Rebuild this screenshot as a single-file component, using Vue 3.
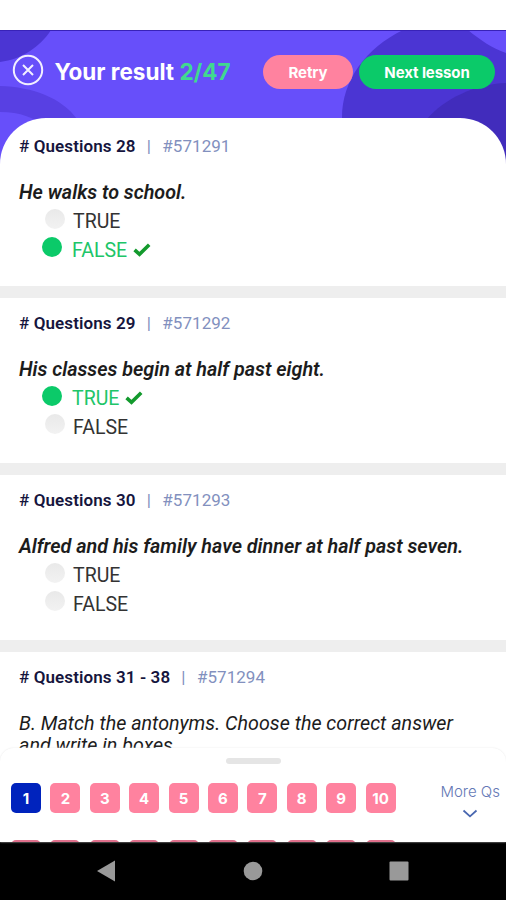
<script setup>
import { ref } from 'vue'

const score = ref('2/47')
const current = ref(1)

const questions = ref([
  {
    title: 'Questions 28',
    code: '#571291',
    text: 'He walks to school.',
    answers: [
      { label: 'TRUE', correct: false },
      { label: 'FALSE', correct: true },
    ],
  },
  {
    title: 'Questions 29',
    code: '#571292',
    text: 'His classes begin at half past eight.',
    answers: [
      { label: 'TRUE', correct: true },
      { label: 'FALSE', correct: false },
    ],
  },
  {
    title: 'Questions 30',
    code: '#571293',
    text: 'Alfred and his family have dinner at half past seven.',
    answers: [
      { label: 'TRUE', correct: false },
      { label: 'FALSE', correct: false },
    ],
  },
  {
    title: 'Questions 31 - 38',
    code: '#571294',
    intro: 'B. Match the antonyms. Choose the correct answer and write in boxes.',
    answers: [],
  },
])
</script>

<template>
  <div class="screen">
    <header class="header">
      <svg class="shapes" width="506" height="142" viewBox="0 0 506 142">
        <path d="M0 0H51C40 17 22 29 0 32Z" fill="#4b35d3" />
        <path d="M0 56C33 57 62 68 77 89V100H48C35 87 20 82 0 82Z" fill="#5840e3" />
        <path d="M403 0H468C480 10 492 18 506 23V142H342V88C342 50 366 18 403 0Z" fill="#4b35d3" />
        <path d="M427 89C444 69 475 54 506 53V142H427Z" fill="#412cbc" />
        <path d="M0 .5H506" stroke="#3822b8" />
      </svg>
      <div class="bar">
        <svg class="close" width="32" height="32" viewBox="0 0 32 32" fill="none" stroke="#f2efff" stroke-width="2">
          <circle cx="16" cy="16" r="14.2" />
          <path d="M11 11L21 21M21 11L11 21" />
        </svg>
        <h1>Your result <span>{{ score }}</span></h1>
        <button class="retry">Retry</button>
        <button class="next">Next lesson</button>
      </div>
    </header>

    <main class="sheet">
      <section v-for="q in questions" :key="q.code" class="question">
        <div class="head">
          <b><i>#</i> {{ q.title }}</b>
          <span class="sep">|</span>
          <span>{{ q.code }}</span>
        </div>
        <p v-if="q.text" class="text">{{ q.text }}</p>
        <p v-if="q.intro" class="intro">{{ q.intro }}</p>
        <ul v-if="q.answers.length">
          <li v-for="a in q.answers" :key="a.label" :class="{ correct: a.correct }">
            <span class="dot"></span>
            <span class="label">{{ a.label }}</span>
            <svg v-if="a.correct" class="check" width="18" height="14" viewBox="0 0 18 14" fill="none">
              <path d="M1.6 6.8L6.5 11.3L16.2 1.8" stroke="#139a2d" stroke-width="3.6" />
            </svg>
          </li>
        </ul>
      </section>
    </main>

    <footer class="panel">
      <div class="handle"></div>
      <div class="pager">
        <div class="numbers">
          <span v-for="n in 10" :key="n" class="number" :class="{ active: n === current }">{{ n }}</span>
          <!-- collapsed second row, only its top edge shows -->
          <span v-for="n in 10" :key="'row2-' + n" class="number peek"></span>
        </div>
        <div class="more">
          <span>More Qs</span>
          <svg width="16" height="10" viewBox="0 0 16 10" fill="none">
            <path d="M1.5 1.5L8 7.3L14.5 1.5" stroke="#4967b0" stroke-width="1.8" />
          </svg>
        </div>
      </div>
    </footer>

    <nav class="android">
      <svg width="20" height="22" viewBox="0 0 20 22"><path d="M1 11L19 .5V21.5Z" fill="#999" /></svg>
      <svg width="20" height="20" viewBox="0 0 20 20"><circle cx="10" cy="10" r="9.3" fill="#999" /></svg>
      <svg width="20" height="20" viewBox="0 0 20 20"><rect x=".5" y=".5" width="19" height="19" rx="1" fill="#999" /></svg>
    </nav>
  </div>
</template>

<style>
body {
  margin: 0;
  background: #fff;
}
</style>

<style scoped>
.screen {
  width: 506px;
  height: 900px;
  padding-top: 30px;
  box-sizing: border-box;
  overflow: hidden;
  display: flex;
  flex-direction: column;
  background: #fff;
  font-family: Roboto, "Liberation Sans", sans-serif;
}

.header {
  position: relative;
  flex: none;
  height: 142px;
  background: #674ffa;
}

.shapes {
  position: absolute;
  left: 0;
  top: 0;
}

.bar {
  position: relative;
  display: flex;
  align-items: center;
  height: 84px;
  padding: 0 11px 0 11.5px;
  font-family: Inter, sans-serif;
}

.close {
  flex: none;
  margin-top: -5px;
}

h1 {
  margin: -2px auto 0 11px;
  font-size: 22.5px;
  font-weight: 700;
  white-space: nowrap;
  color: #fff;
}

h1 span {
  color: #40d98f;
}

button {
  height: 34px;
  padding: 0;
  border: 0;
  border-radius: 17px;
  font: 700 15px Inter, sans-serif;
  letter-spacing: -0.1px;
  color: #fff;
}

.retry {
  width: 90px;
  margin-right: 6px;
  background: #ff829f;
}

.next {
  width: 136px;
  background: #0bca69;
}

.sheet {
  flex: none;
  height: 630px;
  margin-top: -54px;
  padding-top: 3px;
  box-sizing: border-box;
  position: relative;
  overflow: hidden;
  border-radius: 46px 46px 0 0;
  background: #fff;
}

.question {
  height: 177px;
  padding: 15px 19px 0;
  box-sizing: border-box;
  border-bottom: 12px solid #eee;
}

.head {
  display: flex;
  height: 20px;
  line-height: 20px;
  font-size: 17px;
  letter-spacing: 0.05px;
  white-space: pre;
  color: #8290be;
}

.head b {
  font-weight: 600;
  letter-spacing: 0.1px;
  color: #15153d;
}

.head i {
  font-style: normal;
  font-weight: 500;
}

.sep {
  margin: 0 11.5px 0 11px;
}

.text,
.intro {
  margin: 25px 0 0;
  font-size: 19.75px;
  line-height: 24px;
  font-style: italic;
  color: #1c1c1c;
}

.text {
  font-weight: 600;
  white-space: nowrap;
}

.intro {
  margin-top: 26px;
  width: 445px;
  font-size: 19.7px;
  line-height: 22px;
}

ul {
  margin: 2px 0 0;
  padding: 0 0 0 26px;
  list-style: none;
}

li {
  display: flex;
  align-items: center;
  height: 28.5px;
  font-size: 19.5px;
  color: #333;
}

.label {
  padding-top: 1px;
}

.dot {
  width: 20px;
  height: 20px;
  margin: -5px 8px 0 0;
  border-radius: 50%;
  background: linear-gradient(#e9e9e9, #f2f2f2);
}

.correct {
  margin-left: -3px;
  color: #20c568;
}

.correct .dot {
  margin-right: 10px;
  background: #0bca69;
}

.check {
  margin-left: 6px;
}

.panel {
  position: relative;
  flex: none;
  height: 94px;
  overflow: hidden;
  border-radius: 14px 14px 0 0;
  background: #fff;
  box-shadow: 0 0 2px #e6e6e6;
}

.handle {
  width: 55px;
  height: 6px;
  margin: 10px auto 0;
  border-radius: 3px;
  background: #e5e5e5;
}

.pager {
  display: flex;
  justify-content: space-between;
  padding: 19px 6px 0 11px;
}

.numbers {
  display: grid;
  grid-template-columns: repeat(10, 30px);
  gap: 27px 9.4px;
}

.number {
  height: 30px;
  border-radius: 5px;
  background: #ff829f;
  font: 700 15px/31px Inter, sans-serif;
  text-align: center;
  color: #fff;
}

.number.active {
  background: #0023bd;
}

.number.peek {
  background: #e0708c;
}

.more {
  display: flex;
  flex-direction: column;
  align-items: center;
  gap: 8px;
  white-space: nowrap;
  font: 300 15px/18px Inter, sans-serif;
  color: #6478b5;
}

.android {
  flex: none;
  height: 58px;
  padding: 0 97px 0 96px;
  display: flex;
  align-items: center;
  justify-content: space-between;
  background: #000;
}
</style>
